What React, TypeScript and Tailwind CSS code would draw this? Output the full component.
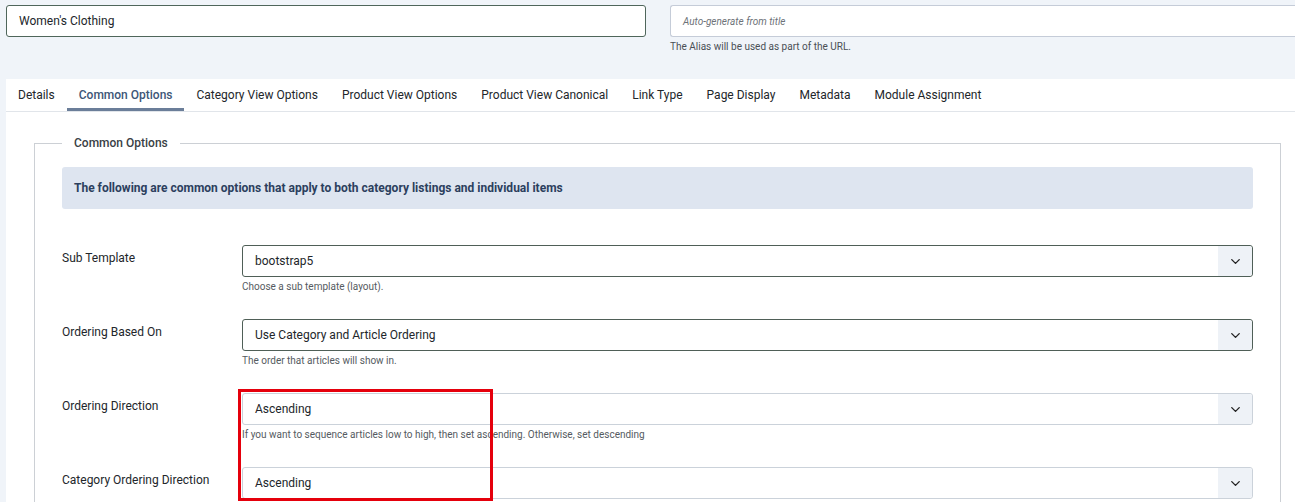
import { ChevronDown } from "lucide-react";

const tabs = [
  "Details",
  "Common Options",
  "Category View Options",
  "Product View Options",
  "Product View Canonical",
  "Link Type",
  "Page Display",
  "Metadata",
  "Module Assignment",
];

interface SelectRowProps {
  label: string;
  value: string;
  help?: string;
  dark?: boolean;
}

function SelectRow({ label, value, help, dark }: SelectRowProps) {
  return (
    <div className="flex h-[74px]">
      <div className="w-[180px] shrink-0 pt-[4px] text-[12px] text-[#22262a]">{label}</div>
      <div className="flex-1">
        <div
          className={`flex h-[32px] items-center rounded-[3px] border bg-white ${
            dark ? "border-[#4f5f57]" : "border-[#cbd2da]"
          }`}
        >
          <span className="flex-1 pl-[12px] text-[12px] text-[#22262a]">{value}</span>
          <span className="flex h-full w-[34px] items-center justify-center rounded-r-[3px] bg-[#eef2f7]">
            <ChevronDown className="h-[15px] w-[15px] text-[#222]" strokeWidth={2.2} />
          </span>
        </div>
        {help && <div className="mt-[2px] text-[10px] text-[#555b61]">{help}</div>}
      </div>
    </div>
  );
}

export default function App() {
  return (
    <div
      className="relative h-[502px] w-[1295px] overflow-hidden bg-[#f0f4f9]"
      style={{ fontFamily: "Roboto, 'Liberation Sans', sans-serif" }}
    >
      {/* Title + alias */}
      <div className="flex h-[79px] gap-[24px] pl-[6px] pt-[5px]">
        <div className="flex h-[32px] w-[640px] items-center rounded-[3px] border border-[#4f665b] bg-white pl-[12px] text-[12px] text-[#22262a]">
          Women's Clothing
        </div>
        <div className="flex-1">
          <div className="flex h-[32px] items-center rounded-l-[3px] border border-r-0 border-[#c5ccd8] bg-white pl-[12px] text-[10px] italic text-[#6d7278]">
            Auto-generate from title
          </div>
          <div className="mt-[2px] text-[10px] text-[#4a4f55]">The Alias will be used as part of the URL.</div>
        </div>
      </div>

      <div className="ml-[6px] h-[423px] bg-white">
        {/* Tabs */}
        <div className="flex h-[33px] border-b border-[#e1e5ea]">
          {tabs.map((t) => {
            const active = t === "Common Options";
            return (
              <div
                key={t}
                className={`flex items-center border-b-[3px] px-[12px] pt-[2px] text-[12px] ${
                  active ? "border-[#6b7e99] font-medium text-[#3d5677]" : "border-transparent text-[#22262a]"
                }`}
              >
                {t}
              </div>
            );
          })}
        </div>

        {/* Fieldset */}
        <div className="pl-[28px] pr-[14px]">
          <fieldset className="mt-[22px] border border-[#ccd0d5] px-[27px]">
            <legend className="px-[12px] text-[12px] font-medium leading-[18px] text-[#3a3f45]">Common Options</legend>
            <div className="mt-[15px] flex h-[42px] items-center rounded-[3px] bg-[#dee5f0] pl-[12px] text-[12px] font-bold text-[#2c3f5e]">
              The following are common options that apply to both category listings and individual items
            </div>
            <div className="mt-[36px]">
              <SelectRow label="Sub Template" value="bootstrap5" help="Choose a sub template (layout)." dark />
              <SelectRow
                label="Ordering Based On"
                value="Use Category and Article Ordering"
                help="The order that articles will show in."
                dark
              />
              <SelectRow
                label="Ordering Direction"
                value="Ascending"
                help="If you want to sequence articles low to high, then set ascending. Otherwise, set descending"
              />
              <SelectRow label="Category Ordering Direction" value="Ascending" />
            </div>
          </fieldset>
        </div>
      </div>

      {/* Highlight */}
      <div className="absolute left-[238px] top-[389px] h-[112px] w-[255px] border-[3px] border-[#e5000c]" />
    </div>
  );
}
